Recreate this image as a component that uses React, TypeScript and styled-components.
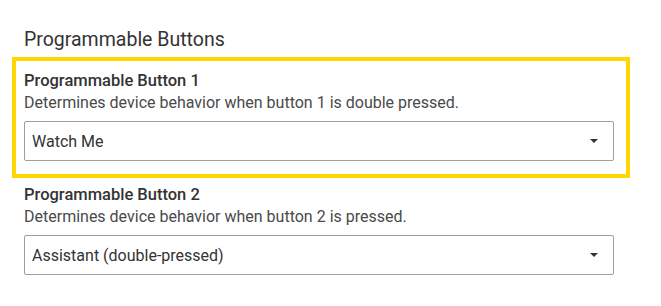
import styled, { createGlobalStyle } from "styled-components";

const GlobalStyle = createGlobalStyle`
  body {
    margin: 0;
    background: #fff;
    font-family: Roboto, "Noto Sans", Arial, sans-serif;
    -webkit-font-smoothing: antialiased;
  }
`;

const buttons = [
  {
    id: 1,
    label: "Programmable Button 1",
    description: "Determines device behavior when button 1 is double pressed.",
    value: "Watch Me",
    focused: true,
  },
  {
    id: 2,
    label: "Programmable Button 2",
    description: "Determines device behavior when button 2 is pressed.",
    value: "Assistant (double-pressed)",
    focused: false,
  },
];

const App = () => {
  return (
    <>
      <GlobalStyle />
      <Page>
        <Heading>Programmable Buttons</Heading>
        {buttons.map((b) => (
          <Field key={b.id} $focused={b.focused}>
            <Label>{b.label}</Label>
            <Description>{b.description}</Description>
            <Select>
              <SelectValue>{b.value}</SelectValue>
              <Caret viewBox="0 0 8 4" aria-hidden="true">
                <path d="M0 0h8L4 4z" fill="#333" />
              </Caret>
            </Select>
          </Field>
        ))}
      </Page>
    </>
  );
};

const Page = styled.div`
  padding: 28px 24px 0 24px;
  width: 590px;
`;

const Heading = styled.h2`
  margin: 0 0 9px 0;
  font-size: 19.5px;
  line-height: 24px;
  font-weight: 400;
  color: #333;
`;

const Field = styled.div<{ $focused: boolean }>`
  margin: 0 -12px 1px -8px;
  padding: 9px 12px 13px 8px;
  outline: ${(p) => (p.$focused ? "4px solid #ffd600" : "none")};
`;

const Label = styled.div`
  font-size: 16.5px;
  line-height: 22px;
  font-weight: 500;
  color: #333;
`;

const Description = styled.div`
  font-size: 16px;
  line-height: 22px;
  font-weight: 400;
  color: #4a4a4a;
`;

const Select = styled.div`
  margin-top: 7px;
  height: 38px;
  border: 1px solid #9e9e9e;
  border-radius: 2px;
  display: flex;
  align-items: center;
  justify-content: space-between;
  padding: 0 15px 0 7px;
`;

const SelectValue = styled.span`
  font-size: 16px;
  color: #333;
`;

const Caret = styled.svg`
  width: 8px;
  height: 4px;
`;

export default App;
